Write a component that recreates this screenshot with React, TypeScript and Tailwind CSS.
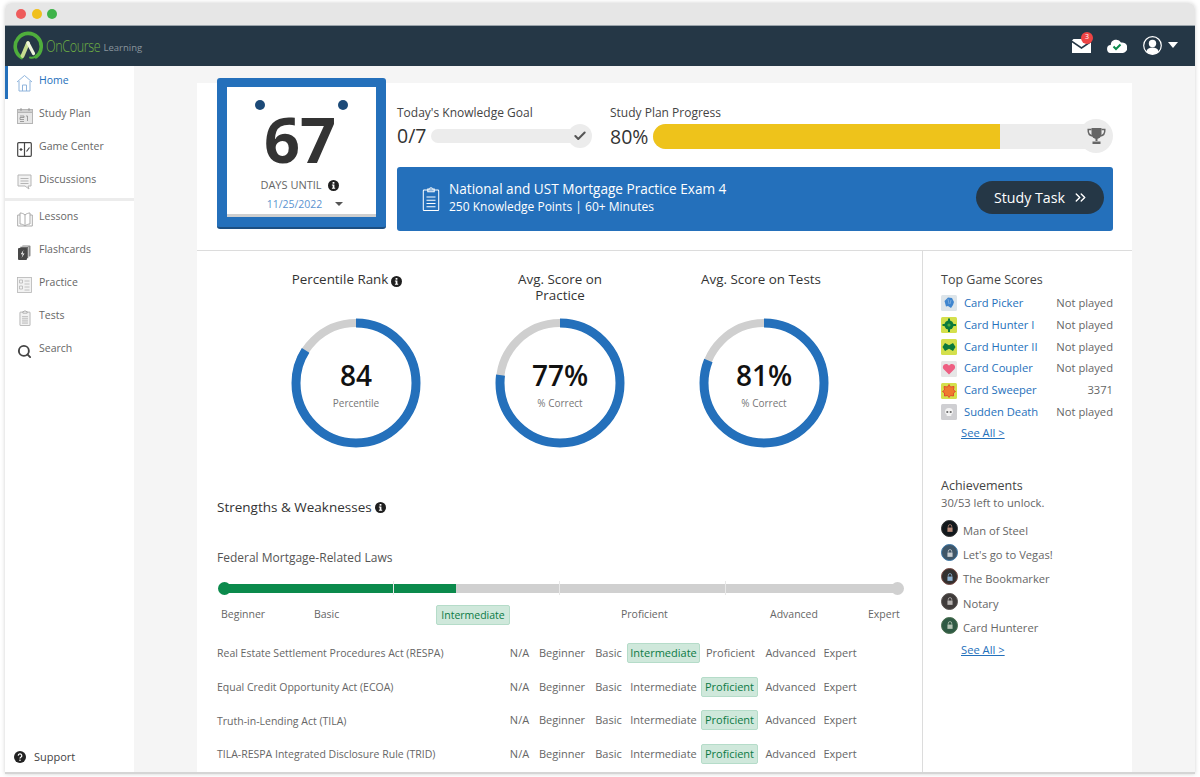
import { ReactNode } from "react";
import { Check, ChevronsRight, Search } from "lucide-react";

const gray = "#cfcfcf";

function HomeIcon() {
  return (
    <svg width="17" height="18" viewBox="0 0 17 18" fill="none" stroke="#8fb4dc" strokeWidth="1">
      <path d="M1 8 8.500 1.500 16 8M3 7v10h11V7M6.500 17v-6h4v6" />
    </svg>
  );
}

function PlanIcon() {
  return (
    <svg width="16" height="16" viewBox="0 0 16 16">
      <rect x="0.500" y="1.500" width="15" height="14" fill="#e6e6e6" stroke="#b5b5b5" />
      <rect x="0.500" y="1.500" width="15" height="3" fill="#cfcfcf" stroke="#b5b5b5" />
      <path d="M4 0v3M12 0v3M3 8h4v1.500H3v2h4M9 8h1.500v5M3 13.500h4" stroke="#8a8a8a" fill="none" strokeWidth="0.800" />
    </svg>
  );
}

function GameIcon() {
  return (
    <svg width="15" height="15" viewBox="0 0 15 15" fill="none" stroke="#444" strokeWidth="1.200">
      <rect x="0.700" y="0.700" width="13.600" height="13.600" rx="1" />
      <path d="M7.500 1v13M2.500 7.500h3M4 6v3M9.500 9.500l3-4" />
    </svg>
  );
}

function ChatIcon() {
  return (
    <svg width="15" height="16" viewBox="0 0 15 16" fill="#f2f2f2" stroke="#b5b5b5" strokeWidth="1">
      <path d="M1 1h13v11h-3l1 3-4-3H1z" />
      <path d="M3.500 4.500h8M3.500 7h8M3.500 9.500h8" fill="none" />
    </svg>
  );
}

function BookIcon() {
  return (
    <svg width="16" height="15" viewBox="0 0 16 15" fill="none" stroke="#aaa" strokeWidth="1">
      <path d="M8 3C6.500 1.500 4.500 1 3 1v11c1.500 0 3.500.5 5 2 1.500-1.500 3.500-2 5-2V1c-1.500 0-3.500.5-5 2zM8 3v11M3 3H.7v11H15.300V3H13" />
    </svg>
  );
}

function CardsIcon() {
  return (
    <svg width="13" height="15" viewBox="0 0 13 15">
      <rect x="4" y="0.500" width="8.500" height="11" rx="1" fill="#8a8a8a" />
      <rect x="2" y="1.500" width="8.500" height="12" rx="1" fill="#6a6a6a" stroke="#fff" strokeWidth="0.500" />
      <rect x="0" y="3" width="9" height="12" rx="1" fill="#484848" />
      <path d="M5.500 5 2.800 9.300h2L3.500 13l3-4.500h-2z" fill="#fff" />
    </svg>
  );
}

function PracticeIcon() {
  return (
    <svg width="15" height="16" viewBox="0 0 15 16" fill="#f2f2f2" stroke="#b5b5b5" strokeWidth="0.800">
      <rect x="0.500" y="0.500" width="14" height="15" />
      <path d="M2.500 3h3v3h-3zM2.500 9h3v3h-3zM7.500 4h5M7.500 7h5M7.500 10h5M7.500 13h5" fill="none" />
    </svg>
  );
}

function ClipboardIcon({ color, fill }: { color: string; fill: string }) {
  return (
    <svg viewBox="0 0 14 19" className="h-full w-full" fill={fill} stroke={color} strokeWidth="0.800">
      <rect x="1" y="2.500" width="12" height="16" rx="0.600" />
      <path d="M4.500 3.800V1.800h1.500a1 1 0 0 1 2 0h1.500v2z" />
      <path d="M3.500 8h7M3.500 10.500h7M3.500 13h7M3.500 15.500h7" fill="none" />
    </svg>
  );
}

function TrophyIcon() {
  return (
    <svg width="19" height="18" viewBox="0 0 19 18">
      <path d="M4.500 1h10v6a5 5 0 0 1-10 0z" fill="#666" />
      <path d="M4.500 2.500H1.200C1 6 2.500 8.500 5.500 9M14.500 2.500h3.300C18 6 16.500 8.500 13.500 9" fill="none" stroke="#666" strokeWidth="1.500" />
      <path d="M8.500 11h2v3h-2zM5.500 14.500h8V17h-8z" fill="#666" />
    </svg>
  );
}

function InfoDot() {
  return (
    <svg width="11" height="11" viewBox="0 0 11 11" className="inline-block shrink-0">
      <circle cx="5.500" cy="5.500" r="5.500" fill="#1f1f1f" />
      <rect x="4.600" y="2" width="1.800" height="1.700" fill="#fff" />
      <path d="M3.900 4.500h2.500v3.300h.8v1H3.900v-1h.8V5.500h-.8z" fill="#fff" />
    </svg>
  );
}

function Logo() {
  return (
    <svg width="30" height="31" viewBox="0 0 30 31" fill="none">
      <path d="M8.500 26.500A13 13 0 1 1 23 25.800" stroke="#4fae3c" strokeWidth="3.600" strokeLinecap="round" />
      <path d="M9.500 25 15 12" stroke="#c5dc8f" strokeWidth="3.800" strokeLinecap="round" />
      <path d="M15 12 20.500 22.500" stroke="#eef4dc" strokeWidth="3.200" strokeLinecap="round" />
      <path d="M17 26.500c1.800.6 3.500.3 5-.6" stroke="#4fae3c" strokeWidth="2" strokeLinecap="round" />
    </svg>
  );
}

const mainNav: { label: string; icon: ReactNode; active?: boolean }[] = [
  { label: "Home", icon: <HomeIcon />, active: true },
  { label: "Study Plan", icon: <PlanIcon /> },
  { label: "Game Center", icon: <GameIcon /> },
  { label: "Discussions", icon: <ChatIcon /> },
];

const studyNav: { label: string; icon: ReactNode }[] = [
  { label: "Lessons", icon: <BookIcon /> },
  { label: "Flashcards", icon: <CardsIcon /> },
  { label: "Practice", icon: <PracticeIcon /> },
  { label: "Tests", icon: <div className="h-[16px] w-[12px]"><ClipboardIcon color="#999" fill="#f2f2f2" /></div> },
  { label: "Search", icon: <Search size={15} strokeWidth={3} color="#444" /> },
];

function NavItem({ label, icon, active }: { label: string; icon: ReactNode; active?: boolean }) {
  return (
    <div className={`flex h-[33px] items-center border-l-[3px] ${active ? "border-[#2470bb] text-[#2470bb]" : "border-transparent text-[#666]"}`}>
      <div className="flex w-[31px] justify-center pl-[2px] pt-[1px]">{icon}</div>
      <span className="pb-[4px] text-[10.500px]">{label}</span>
    </div>
  );
}

function Sidebar() {
  return (
    <aside className="flex w-[129px] shrink-0 flex-col bg-white">
      {mainNav.map((n) => (
        <NavItem key={n.label} {...n} />
      ))}
      <div className="mb-[1px] h-[3px] bg-[#ececec]" />
      <div>
        {studyNav.map((n) => (
          <NavItem key={n.label} {...n} />
        ))}
      </div>
      <div className="mb-[7px] mt-auto flex items-center pl-[9px]">
        <svg width="12" height="12" viewBox="0 0 12 12" className="mr-[8px]">
          <circle cx="6" cy="6" r="6" fill="#222" />
          <path d="M4.200 4.600a1.800 1.800 0 1 1 2.600 1.700c-.6.300-.8.600-.8 1.200" stroke="#fff" strokeWidth="1.200" fill="none" />
          <circle cx="6" cy="9.300" r="0.800" fill="#fff" />
        </svg>
        <span className="text-[11px] font-medium text-[#444]">Support</span>
      </div>
    </aside>
  );
}

function Header() {
  return (
    <header className="flex h-[41px] items-center border-t border-[#9aa3aa] bg-[#253746] pl-[8px] pr-[17px]">
      <Logo />
      <span className="ml-[3px] mr-[-19px] inline-block origin-left scale-x-[0.74] text-[17px] font-light tracking-[-0.500px] text-[#6eb043]">OnCourse</span>
      <span className="ml-[3px] pt-[5px] text-[9.500px] text-[#8a959d]">Learning</span>
      <div className="-mt-[2px] ml-auto flex items-center">
        <div className="relative">
          <svg width="19" height="14" viewBox="0 0 19 14" className="mt-[1px]">
            <path d="M0 1.500 1.500 0h16L19 1.500 9.500 8z" fill="#fff" />
            <path d="M0 3.500 9.500 10 19 3.500V14H0z" fill="#fff" />
          </svg>
          <span className="absolute -right-[2px] -top-[6px] flex h-[12px] w-[12px] items-center justify-center rounded-full bg-[#ee4444] text-[7px] text-white">3</span>
        </div>
        <svg width="20" height="15" viewBox="0 0 20 15" className="ml-[16px]">
          <path d="M4.500 15a4 4 0 0 1-.8-8A5.500 5.500 0 0 1 14 4.500 5.300 5.300 0 0 1 16 15z" fill="#fff" />
          <path d="M6.500 8.500 9 11l4.500-4.500" stroke="#0b8a4c" strokeWidth="2" fill="none" />
        </svg>
        <svg width="19" height="19" viewBox="0 0 19 19" className="ml-[16px]">
          <circle cx="9.500" cy="9.500" r="8.800" fill="none" stroke="#fff" strokeWidth="1.200" />
          <circle cx="9.500" cy="7.500" r="3.700" fill="#fff" />
          <path d="M3.500 15.500c.5-3 3-4 6-4s5.500 1 6 4a8 8 0 0 1-12 0z" fill="#fff" />
        </svg>
        <div className="ml-[6px] h-0 w-0 border-x-[5px] border-t-[6px] border-x-transparent border-t-white" />
      </div>
    </header>
  );
}

function Calendar() {
  return (
    <div className="-mt-[5px] h-[151px] w-[169px] shrink-0 rounded-[3px] border-b-2 border-[#1c4f82] bg-[#2470bb] px-[10px] pt-[9px]">
      <div className="flex h-[130px] flex-col items-center border-b-[3px] border-[#cfcfcf] bg-white">
        <div className="flex w-full justify-between px-[28px] pt-[13px]">
          <div className="h-[10px] w-[10px] rounded-full bg-[#1c4a78]" />
          <div className="h-[10px] w-[10px] rounded-full bg-[#1c4a78]" />
        </div>
        <div className="-mt-[2px] pr-[3px] text-[63px] font-bold leading-[62px] text-[#333]">67</div>
        <div className="mt-[8px] flex items-center gap-[6px] pr-[4px] text-[11px] leading-[14px] text-[#666]">
          DAYS UNTIL <InfoDot />
        </div>
        <div className="mt-[5px] flex items-center pl-[7px] text-[10.500px] leading-[14px] text-[#5b93cf]">
          11/25/2022
          <div className="ml-[13px] h-0 w-0 border-x-[4px] border-t-[4px] border-x-transparent border-t-[#555]" />
        </div>
      </div>
    </div>
  );
}

function TopPanel() {
  return (
    <section className="flex h-[168px] border-b border-[#dcdcdc] pl-[20px]">
      <Calendar />
      <div className="ml-[11px] w-[716px]">
        <div className="flex h-[84px]">
          <div className="w-[213px] pt-[22px]">
            <div className="text-[12px] leading-[16px] text-[#444]">Today's Knowledge Goal</div>
            <div className="mt-[3px] flex items-center">
              <span className="w-[34px] text-[19.500px] leading-[24px] text-[#333]">0/7</span>
              <div className="relative h-[14px] w-[145px] rounded-full bg-[#ececec]">
                <div className="absolute -right-[16px] -top-[5px] flex h-[24px] w-[24px] items-center justify-center rounded-full bg-[#ececec]">
                  <Check size={14} strokeWidth={3.500} color="#555" />
                </div>
              </div>
            </div>
          </div>
          <div className="flex-1 pt-[22px]">
            <div className="text-[12px] leading-[16px] text-[#444]">Study Plan Progress</div>
            <div className="mt-[3px] flex items-center">
              <span className="w-[43px] text-[19.500px] leading-[25px] text-[#333]">80%</span>
              <div className="relative h-[25px] w-[447px] rounded-full bg-[#ececec]">
                <div className="h-full w-[347px] rounded-l-full bg-[#eec31b]" />
                <div className="absolute -right-[13px] -top-[5px] flex h-[34px] w-[34px] items-center justify-center rounded-full bg-[#ececec]">
                  <TrophyIcon />
                </div>
              </div>
            </div>
          </div>
        </div>
        <div className="flex h-[64px] items-center rounded-[3px] bg-[#2470bb] pl-[25px] pr-[9px] text-white">
          <div className="h-[26px] w-[18px]">
            <ClipboardIcon color="#fff" fill="none" />
          </div>
          <div className="ml-[9px] pb-[5px]">
            <div className="text-[13.600px] leading-[19px]">National and UST Mortgage Practice Exam 4</div>
            <div className="text-[12px] leading-[17px]">250 Knowledge Points | 60+ Minutes</div>
          </div>
          <button className="mb-[3px] ml-auto flex h-[33px] w-[128px] items-center justify-center gap-[7px] rounded-full bg-[#253746] pl-[3px] text-[14.200px] text-white">
            Study Task <ChevronsRight size={17} />
          </button>
        </div>
      </div>
    </section>
  );
}

function Ring({ value, big, small }: { value: number; big: string; small: string }) {
  const r = 60;
  const c = 2 * Math.PI * r;
  return (
    <div className="relative h-[130px] w-[130px]">
      <svg width="130" height="130" viewBox="0 0 130 130" className="-rotate-90">
        <circle cx="65" cy="65" r={r} fill="none" stroke={gray} strokeWidth="8" />
        <circle cx="65" cy="65" r={r} fill="none" stroke="#2470bb" strokeWidth="9" strokeDasharray={`${(c * value) / 100} ${c}`} />
      </svg>
      <div className="absolute inset-0 flex flex-col items-center justify-center">
        <div className="text-[28px] font-semibold leading-[36px] text-[#111]">{big}</div>
        <div className="mt-[3px] text-[10px] leading-[14px] text-[#777]">{small}</div>
      </div>
    </div>
  );
}

function Gauge({ title, info, shift, value, big, small }: { title: string; info?: boolean; shift?: string; value: number; big: string; small: string }) {
  return (
    <div className="flex w-[204px] flex-col items-center">
      <div className={`h-[48px] w-[130px] pt-[1px] text-center text-[13.400px] leading-[16px] text-[#333] ${shift ?? ""}`}>
        {title}
        {info && <span className="ml-[3px] inline-block align-[-1px]"><InfoDot /></span>}
      </div>
      <Ring value={value} big={big} small={small} />
    </div>
  );
}

const levelLabels = ["N/A", "Beginner", "Basic", "Intermediate", "Proficient", "Advanced", "Expert"];

const lawRows = [
  { name: "Real Estate Settlement Procedures Act (RESPA)", level: "Intermediate" },
  { name: "Equal Credit Opportunity Act (ECOA)", level: "Proficient" },
  { name: "Truth-in-Lending Act (TILA)", level: "Proficient" },
  { name: "TILA-RESPA Integrated Disclosure Rule (TRID)", level: "Proficient" },
];

function Strengths() {
  return (
    <div className="pl-[20px] pr-[18px]">
      <div className="mt-[49px] flex items-center gap-[3px] text-[13.500px] leading-[20px] text-[#333]">
        Strengths &amp; Weaknesses <InfoDot />
      </div>
      <div className="mt-[31px] text-[12px] leading-[20px] text-[#555]">Federal Mortgage-Related Laws</div>
      <div className="relative ml-[1px] mt-[13.500px] h-[13px] w-[686px]">
        <div className="absolute left-[6px] right-[6px] top-[2px] h-[9px] bg-[#d0d0d0]" />
        <div className="absolute left-[6px] top-[2px] h-[9px] w-[232px] bg-[#0b8a4c]" />
        <div className="absolute left-0 top-0 h-[13px] w-[13px] rounded-full bg-[#0b8a4c]" />
        <div className="absolute right-0 top-0 h-[13px] w-[13px] rounded-full bg-[#d0d0d0]" />
        <div className="absolute -top-[1px] left-[175px] h-[14px] w-px bg-[#e8e8e8]" />
        <div className="absolute -top-[1px] left-[341px] h-[14px] w-px bg-[#e8e8e8]" />
        <div className="absolute -top-[1px] left-[507px] h-[14px] w-px bg-[#e8e8e8]" />
      </div>
      <div className="mt-[10px] flex h-[20px] items-center text-[10.500px] text-[#666]">
        <span className="ml-[4px] w-[93px]">Beginner</span>
        <span className="w-[122px]">Basic</span>
        <span className="w-[74px] rounded-[2px] border border-[#b5dcc9] bg-[#cfe8db] text-center leading-[18px] text-[#0b7a45]">Intermediate</span>
        <span className="ml-[111px] w-[149px]">Proficient</span>
        <span className="w-[98px]">Advanced</span>
        <span>Expert</span>
      </div>
      <div className="mt-[12px]">
        {lawRows.map((row) => (
          <div key={row.name} className="grid h-[33.600px] grid-cols-[288px_29px_56px_37px_73px_61px_59px_40px] items-center text-[11px] text-[#666]">
            <span className="pt-[2px] text-[10.500px]">{row.name}</span>
            {levelLabels.map((l) => (
              <span key={l} className="flex justify-center">
                {l === row.level ? (
                  <span className={`h-[20px] rounded-[2px] border border-[#b5dcc9] bg-[#cfe8db] text-center leading-[18px] text-[#0b7a45] ${l === "Proficient" ? "w-[57px] -translate-x-[1px]" : "w-[73px]"}`}>
                    {l}
                  </span>
                ) : (
                  l
                )}
              </span>
            ))}
          </div>
        ))}
      </div>
    </div>
  );
}

function GameIcon16({ bg, children }: { bg: string; children: ReactNode }) {
  return (
    <svg width="16" height="16" viewBox="0 0 16 16" className="shrink-0">
      <rect width="16" height="16" rx="1.500" fill={bg} />
      {children}
    </svg>
  );
}

const games: { name: string; score: string; icon: ReactNode }[] = [
  {
    name: "Card Picker",
    score: "Not played",
    icon: (
      <GameIcon16 bg="#dde5ea">
        <path d="M3.500 6 7 2.500l4 .5 2 4-1 3-2 3-3-2-2 .5z" fill="#3f86cf" />
        <path d="M7 4l1 5M10 5 9 9" stroke="#8db8e2" strokeWidth="0.700" />
      </GameIcon16>
    ),
  },
  {
    name: "Card Hunter I",
    score: "Not played",
    icon: (
      <GameIcon16 bg="#d4e04c">
        <circle cx="8" cy="8" r="4.600" fill="#0b7a3c" />
        <path d="M7 1.500h2V15H7zM1.500 7H15v2H1.500z" fill="#0b7a3c" />
        <circle cx="8" cy="8" r="1.600" fill="#4fae3c" />
      </GameIcon16>
    ),
  },
  {
    name: "Card Hunter II",
    score: "Not played",
    icon: (
      <GameIcon16 bg="#d4e04c">
        <path d="M1.500 8 4 4l4 2.200L12 4l2.500 4-2.500 4-4-2.200L4 12z" fill="#0b7a3c" />
      </GameIcon16>
    ),
  },
  {
    name: "Card Coupler",
    score: "Not played",
    icon: (
      <GameIcon16 bg="#e6e6e6">
        <path d="M8 13.500 2.500 8C1 6 2.500 3 5 3c1.300 0 2.400.7 3 1.700C8.600 3.700 9.700 3 11 3c2.500 0 4 3 2.500 5z" fill="#ee5f82" />
      </GameIcon16>
    ),
  },
  {
    name: "Card Sweeper",
    score: "3371",
    icon: (
      <GameIcon16 bg="#d4e04c">
        <path d="M8 1.500 9.500 4 13 3.500 12.500 7 14.500 8.500 12.500 10 12.500 13 9.500 12.500 8 14.500 6.500 12.500 3.500 13 3.500 10 1.500 8.500 3.500 7 3 3.500 6.500 4z" fill="#ef7a2e" stroke="#e0392b" strokeWidth="0.800" />
      </GameIcon16>
    ),
  },
  {
    name: "Sudden Death",
    score: "Not played",
    icon: (
      <GameIcon16 bg="#cfcfd2">
        <path d="M8 4c2.800 0 4 1.700 4 3.700 0 1.300-.7 2.300-1.700 2.800V12H5.700v-1.500C4.700 10 4 9 4 7.700 4 5.700 5.200 4 8 4z" fill="#f4f4f4" />
        <circle cx="6.300" cy="8" r="1.100" fill="#666" />
        <circle cx="9.700" cy="8" r="1.100" fill="#666" />
      </GameIcon16>
    ),
  },
];

const achievements = [
  { name: "Man of Steel", ring: "#12181c", edge: "#333", lock: "#b88a78" },
  { name: "Let's go to Vegas!", ring: "#3f5668", edge: "#3d78a8", lock: "#c9ced2" },
  { name: "The Bookmarker", ring: "#33302f", edge: "#7a4a44", lock: "#8fb3d4" },
  { name: "Notary", ring: "#403c3b", edge: "#5a5452", lock: "#b8b4b2" },
  { name: "Card Hunterer", ring: "#2f5a44", edge: "#4a6f4f", lock: "#b5c4b5" },
];

function SeeAll({ className }: { className: string }) {
  return <a className={`block text-[11.200px] leading-[16px] text-[#2470bb] underline ${className}`}>See All &gt;</a>;
}

function SidePanel() {
  return (
    <div className="flex-1 pl-[18px] pr-[19px] pt-[20px]">
      <div className="text-[12.500px] leading-[18px] text-[#444]">Top Game Scores</div>
      <div className="mt-[3.500px]">
        {games.map((g) => (
          <div key={g.name} className="flex h-[21.800px] items-center text-[11.200px]">
            {g.icon}
            <span className="ml-[7px] text-[#2470bb]">{g.name}</span>
            <span className="ml-auto text-[#666]">{g.score}</span>
          </div>
        ))}
      </div>
      <SeeAll className="ml-[20px] mt-[1.500px]" />
      <div className="mt-[36px] text-[12.500px] leading-[18px] text-[#444]">Achievements</div>
      <div className="text-[11.200px] leading-[15px] text-[#666]">30/53 left to unlock.</div>
      <div className="mt-[11px]">
        {achievements.map((a) => (
          <div key={a.name} className="flex h-[24.300px] items-start text-[11.200px] text-[#666]">
            <div className="-mt-[1px] flex h-[17px] w-[17px] shrink-0 items-center justify-center rounded-full border" style={{ backgroundColor: a.ring, borderColor: a.edge }}>
              <svg width="6" height="8" viewBox="0 0 7 9">
                <path d="M1.500 4V2.500a2 2 0 0 1 4 0V4" fill="none" stroke={a.lock} strokeWidth="0.900" />
                <rect x="0.500" y="4" width="6" height="5" fill={a.lock} />
              </svg>
            </div>
            <span className="ml-[5px] mt-[2px] leading-[16px]">{a.name}</span>
          </div>
        ))}
      </div>
      <SeeAll className="ml-[20px]" />
    </div>
  );
}

export default function App() {
  return (
    <div className="h-[777px] w-[1200px] overflow-hidden bg-white px-[5px] pb-[3px] pt-[3px] font-['Open_Sans',sans-serif]">
      <div className="flex h-full flex-col overflow-hidden rounded-t-[6px] border-b-[2px] border-[#d5d5d5] shadow-[0_0_4px_rgba(0,0,0,0.18)]">
        <div className="flex h-[22px] shrink-0 items-center gap-[5.500px] bg-[#e6e6e6] pl-[11px]">
          <div className="h-[10px] w-[10px] rounded-full bg-[#ee5c5c]" />
          <div className="h-[10px] w-[10px] rounded-full bg-[#f0c01e]" />
          <div className="h-[10px] w-[10px] rounded-full bg-[#3fb34a]" />
        </div>
        <Header />
        <div className="flex min-h-0 flex-1 bg-[#f5f5f5]">
          <Sidebar />
          <main className="ml-[63px] mt-[17px] w-[935px] bg-white">
            <TopPanel />
            <div className="flex h-[522px]">
              <div className="w-[726px] border-r border-[#dcdcdc]">
                <div className="flex pl-[57px] pt-[19px]">
                  <Gauge title="Percentile Rank" info shift="-translate-x-[9px] whitespace-nowrap" value={84} big="84" small="Percentile" />
                  <Gauge title="Avg. Score on Practice" value={77} big="77%" small="% Correct" />
                  <Gauge title="Avg. Score on Tests" shift="-translate-x-[3px]" value={81} big="81%" small="% Correct" />
                </div>
                <Strengths />
              </div>
              <SidePanel />
            </div>
          </main>
        </div>
      </div>
    </div>
  );
}
